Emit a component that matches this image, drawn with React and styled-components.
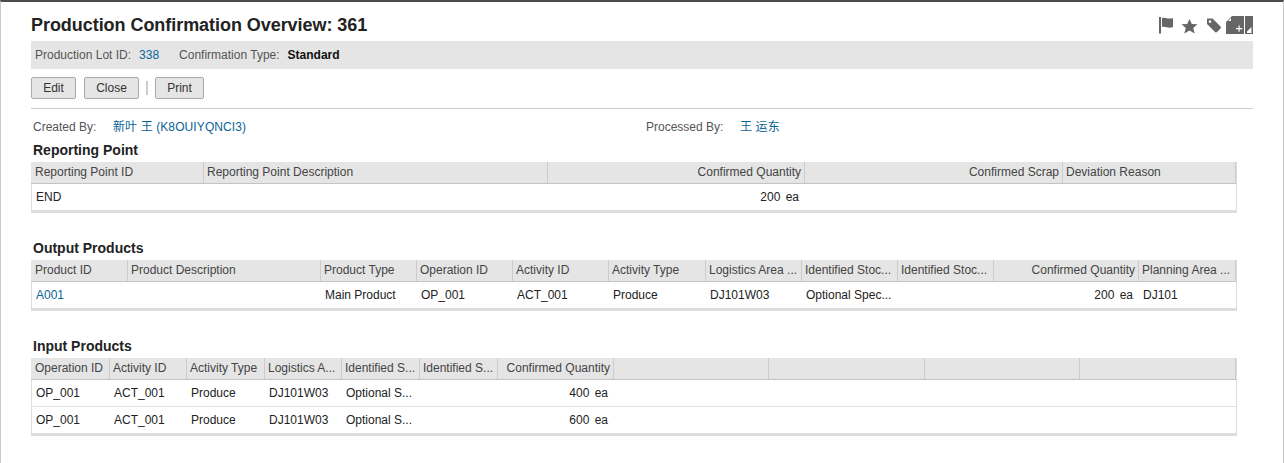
import React from 'react';
import styled, { createGlobalStyle } from 'styled-components';

const GlobalStyle = createGlobalStyle`
  html, body {
    margin: 0;
    padding: 0;
    background: #fff;
  }
  body {
    font-family: "Liberation Sans", Arial, "Noto Sans CJK SC", sans-serif;
    font-size: 12px;
    color: #222;
  }
`;

const Page = styled.div`
  position: relative;
  box-sizing: border-box;
  width: 1284px;
  height: 463px;
  overflow: hidden;
  padding: 0 30px;
  border-top: 2px solid #4c4c4c;
  border-left: 1px solid #c8c8c8;
  border-right: 1px solid #c8c8c8;
`;

const EdgeShade = styled.div`
  position: absolute;
  top: 0;
  left: -1px;
  width: 1px;
  height: 64px;
  background: #4c4c4c;
`;

const TitleRow = styled.div`
  display: flex;
  align-items: flex-start;
  justify-content: space-between;
  height: 39px;
`;

const Title = styled.h1`
  margin: 12px 0 0;
  font-size: 18px;
  line-height: 22px;
  font-weight: 700;
  letter-spacing: -0.05px;
  color: #222;
`;

const IconGroup = styled.div`
  display: flex;
  align-items: flex-start;
  margin-top: 15px;
  color: #666;
`;

const IconSlot = styled.svg`
  display: block;
  flex: none;
  margin-left: ${({ $gap }) => $gap}px;
  margin-top: ${({ $lift }) => ($lift ? -$lift : 0)}px;
  fill: currentColor;
`;

const InfoBar = styled.div`
  display: flex;
  align-items: center;
  height: 28px;
  padding-left: 4px;
  background: #e5e5e5;
  color: #555;
`;

const InfoLabel = styled.span`
  margin-right: ${({ $gap }) => $gap}px;
`;

const InfoLink = styled.a`
  margin-right: 20px;
  color: #0b6398;
`;

const InfoValue = styled.span`
  font-weight: 700;
  color: #111;
`;

const Toolbar = styled.div`
  display: flex;
  align-items: center;
  height: 22px;
  margin-top: 8px;
`;

const Button = styled.button`
  box-sizing: border-box;
  width: ${({ $width }) => $width}px;
  height: 22px;
  margin-right: 8px;
  padding: 0;
  border: 1px solid #aaa;
  border-radius: 2px;
  background: #e5e5e5;
  font: inherit;
  color: #333;
`;

const ToolbarDivider = styled.span`
  width: 2px;
  height: 14px;
  margin: 0 7px 0 -1px;
  background: #ccc;
`;

const Rule = styled.div`
  height: 1px;
  margin-top: 9px;
  background: #ccc;
`;

const MetaRow = styled.div`
  display: flex;
  align-items: center;
  height: 33px;
  padding-left: 2px;
  color: #555;
`;

const MetaField = styled.div`
  display: flex;
  align-items: baseline;
  width: ${({ $width }) => $width}px;
`;

const MetaLabel = styled.span`
  width: ${({ $width }) => $width}px;
`;

const MetaLink = styled.a`
  color: #0b6398;
  letter-spacing: 0.1px;
`;

const SectionTitle = styled.h2`
  margin: 0;
  padding-left: 2px;
  height: 20px;
  font-size: 14px;
  line-height: 16px;
  font-weight: 700;
  color: #222;
`;

const Section = styled.section`
  height: 98px;
`;

const Table = styled.div`
  box-sizing: border-box;
  width: 1206px;
  border-right: 1px solid #ddd;
  border-left: 1px solid #ddd;
  border-bottom: 3px solid #ddd;
`;

const Row = styled.div`
  display: grid;
  grid-template-columns: ${({ $columns }) => $columns};
`;

const HeaderRow = styled(Row)`
  height: 21px;
  background: #e5e5e5;
  border-bottom: 1px solid #c4c4c4;
  margin-left: -1px;
`;

const HeaderCell = styled.div`
  overflow: hidden;
  padding: 0 3px;
  border-right: 1px solid #ccc;
  line-height: 21px;
  white-space: nowrap;
  text-align: ${({ $right }) => ($right ? 'right' : 'left')};
  color: #444;
  &:first-child {
    padding-left: 4px;
  }
`;

const BodyRow = styled(Row)`
  height: 26px;
  margin-left: -1px;
  & + & {
    border-top: 1px solid #e2e2e2;
  }
`;

const BodyCell = styled.div`
  overflow: hidden;
  padding: 0 6px 0 4px;
  line-height: 26px;
  white-space: nowrap;
  text-align: ${({ $right }) => ($right ? 'right' : 'left')};
  color: #222;
  &:first-child {
    padding-left: 5px;
  }
`;

const CellLink = styled.a`
  color: #0b6398;
`;

const Qty = styled.span`
  word-spacing: 2px;
`;

const widthsToGrid = edges =>
  edges.map((edge, i) => `${edge - (i ? edges[i - 1] : 31)}px`).join(' ');

const DataTable = ({ edges, headers, rows, rightColumns, linkColumn }) => {
  const columns = widthsToGrid(edges);
  return (
    <Table>
      <HeaderRow $columns={columns}>
        {headers.map((text, i) => (
          <HeaderCell key={i} $right={rightColumns.includes(i)}>{text}</HeaderCell>
        ))}
      </HeaderRow>
      {rows.map((row, r) => (
        <BodyRow key={r} $columns={columns}>
          {headers.map((_, i) => (
            <BodyCell key={i} $right={rightColumns.includes(i)}>
              {i === linkColumn && <CellLink>{row[i]}</CellLink>}
              {rightColumns.includes(i) && <Qty>{row[i]}</Qty>}
              {i !== linkColumn && !rightColumns.includes(i) && row[i]}
            </BodyCell>
          ))}
        </BodyRow>
      ))}
    </Table>
  );
};

const HeaderIcons = () => (
  <IconGroup>
    <IconSlot $gap={0} width="14" height="17" viewBox="0 0 14 17">
      <rect x="0" y="0" width="2" height="16.5" />
      <path d="M3 1c3-1 5 .6 7.500.6 1.300 0 2.500-.2 3.500-.6v9c-1 .5-2.200.7-3.500.7-2.500 0-4.500-1.600-7.500-.7z" />
    </IconSlot>
    <IconSlot $gap={8} width="17" height="17" viewBox="0 0 17 17">
      <path d="M8.500 2l2.300 4.900 5.700.3-4.300 3.700 1.500 5.600-5.200-3-5.200 3 1.500-5.600L.5 7.200l5.700-.3z" />
    </IconSlot>
    <IconSlot $gap={8} width="15" height="17" viewBox="0 0 15 17">
      <path fillRule="evenodd" d="M1 1.500h5.500l8 8a1.500 1.500 0 0 1 0 2l-3.500 3.500a1.500 1.500 0 0 1-2 0L1 7zM4 3.300a1.300 1.300 0 1 0 0 2.600 1.300 1.300 0 0 0 0-2.600z" />
    </IconSlot>
    <IconSlot $gap={5} $lift={1} width="18" height="18" viewBox="0 0 18 18">
      <path fillRule="evenodd" d="M6 0h12v18H0V6zM5 2L2 5h3zM12.500 9.500v2.500H10v1.200h2.500v2.500h1.200v-2.500h2.500V12h-2.500V9.500z" />
    </IconSlot>
    <IconSlot $gap={1} $lift={1} width="8" height="18" viewBox="0 0 8 18">
      <path fillRule="evenodd" d="M0 0h8v18H0zM6.500 11L2 15.500V17h4.500z" />
    </IconSlot>
  </IconGroup>
);

const App = () => (
  <>
    <GlobalStyle />
    <Page>
      <EdgeShade />
      <TitleRow>
        <Title>Production Confirmation Overview: 361</Title>
        <HeaderIcons />
      </TitleRow>
      <InfoBar>
        <InfoLabel $gap={8}>Production Lot ID:</InfoLabel>
        <InfoLink>338</InfoLink>
        <InfoLabel $gap={8}>Confirmation Type:</InfoLabel>
        <InfoValue>Standard</InfoValue>
      </InfoBar>
      <Toolbar>
        <Button $width={45}>Edit</Button>
        <Button $width={55}>Close</Button>
        <ToolbarDivider />
        <Button $width={49}>Print</Button>
      </Toolbar>
      <Rule />
      <MetaRow>
        <MetaField $width={613}>
          <MetaLabel $width={80}>Created By:</MetaLabel>
          <MetaLink>新叶 王 (K8OUIYQNCI3)</MetaLink>
        </MetaField>
        <MetaField $width={300}>
          <MetaLabel $width={94}>Processed By:</MetaLabel>
          <MetaLink>王 运东</MetaLink>
        </MetaField>
      </MetaRow>
      <Section>
        <SectionTitle>Reporting Point</SectionTitle>
        <DataTable
          edges={[204, 548, 805, 1063, 1236]}
          headers={['Reporting Point ID', 'Reporting Point Description', 'Confirmed Quantity', 'Confirmed Scrap', 'Deviation Reason']}
          rows={[['END', '', '200 ea', '', '']]}
          rightColumns={[2, 3]}
        />
      </Section>
      <Section>
        <SectionTitle>Output Products</SectionTitle>
        <DataTable
          edges={[128, 321, 417, 513, 609, 706, 802, 898, 994, 1139, 1236]}
          headers={['Product ID', 'Product Description', 'Product Type', 'Operation ID', 'Activity ID', 'Activity Type', 'Logistics Area ...', 'Identified Stoc...', 'Identified Stoc...', 'Confirmed Quantity', 'Planning Area ...']}
          rows={[['A001', '', 'Main Product', 'OP_001', 'ACT_001', 'Produce', 'DJ101W03', 'Optional Spec...', '', '200 ea', 'DJ101']]}
          rightColumns={[9]}
          linkColumn={0}
        />
      </Section>
      <Section>
        <SectionTitle>Input Products</SectionTitle>
        <DataTable
          edges={[110, 187, 265, 342, 420, 498, 614, 769, 925, 1080, 1236]}
          headers={['Operation ID', 'Activity ID', 'Activity Type', 'Logistics A...', 'Identified S...', 'Identified S...', 'Confirmed Quantity', '', '', '', '']}
          rows={[
            ['OP_001', 'ACT_001', 'Produce', 'DJ101W03', 'Optional S...', '', '400 ea', '', '', '', ''],
            ['OP_001', 'ACT_001', 'Produce', 'DJ101W03', 'Optional S...', '', '600 ea', '', '', '', ''],
          ]}
          rightColumns={[6]}
        />
      </Section>
    </Page>
  </>
);

export default App;
